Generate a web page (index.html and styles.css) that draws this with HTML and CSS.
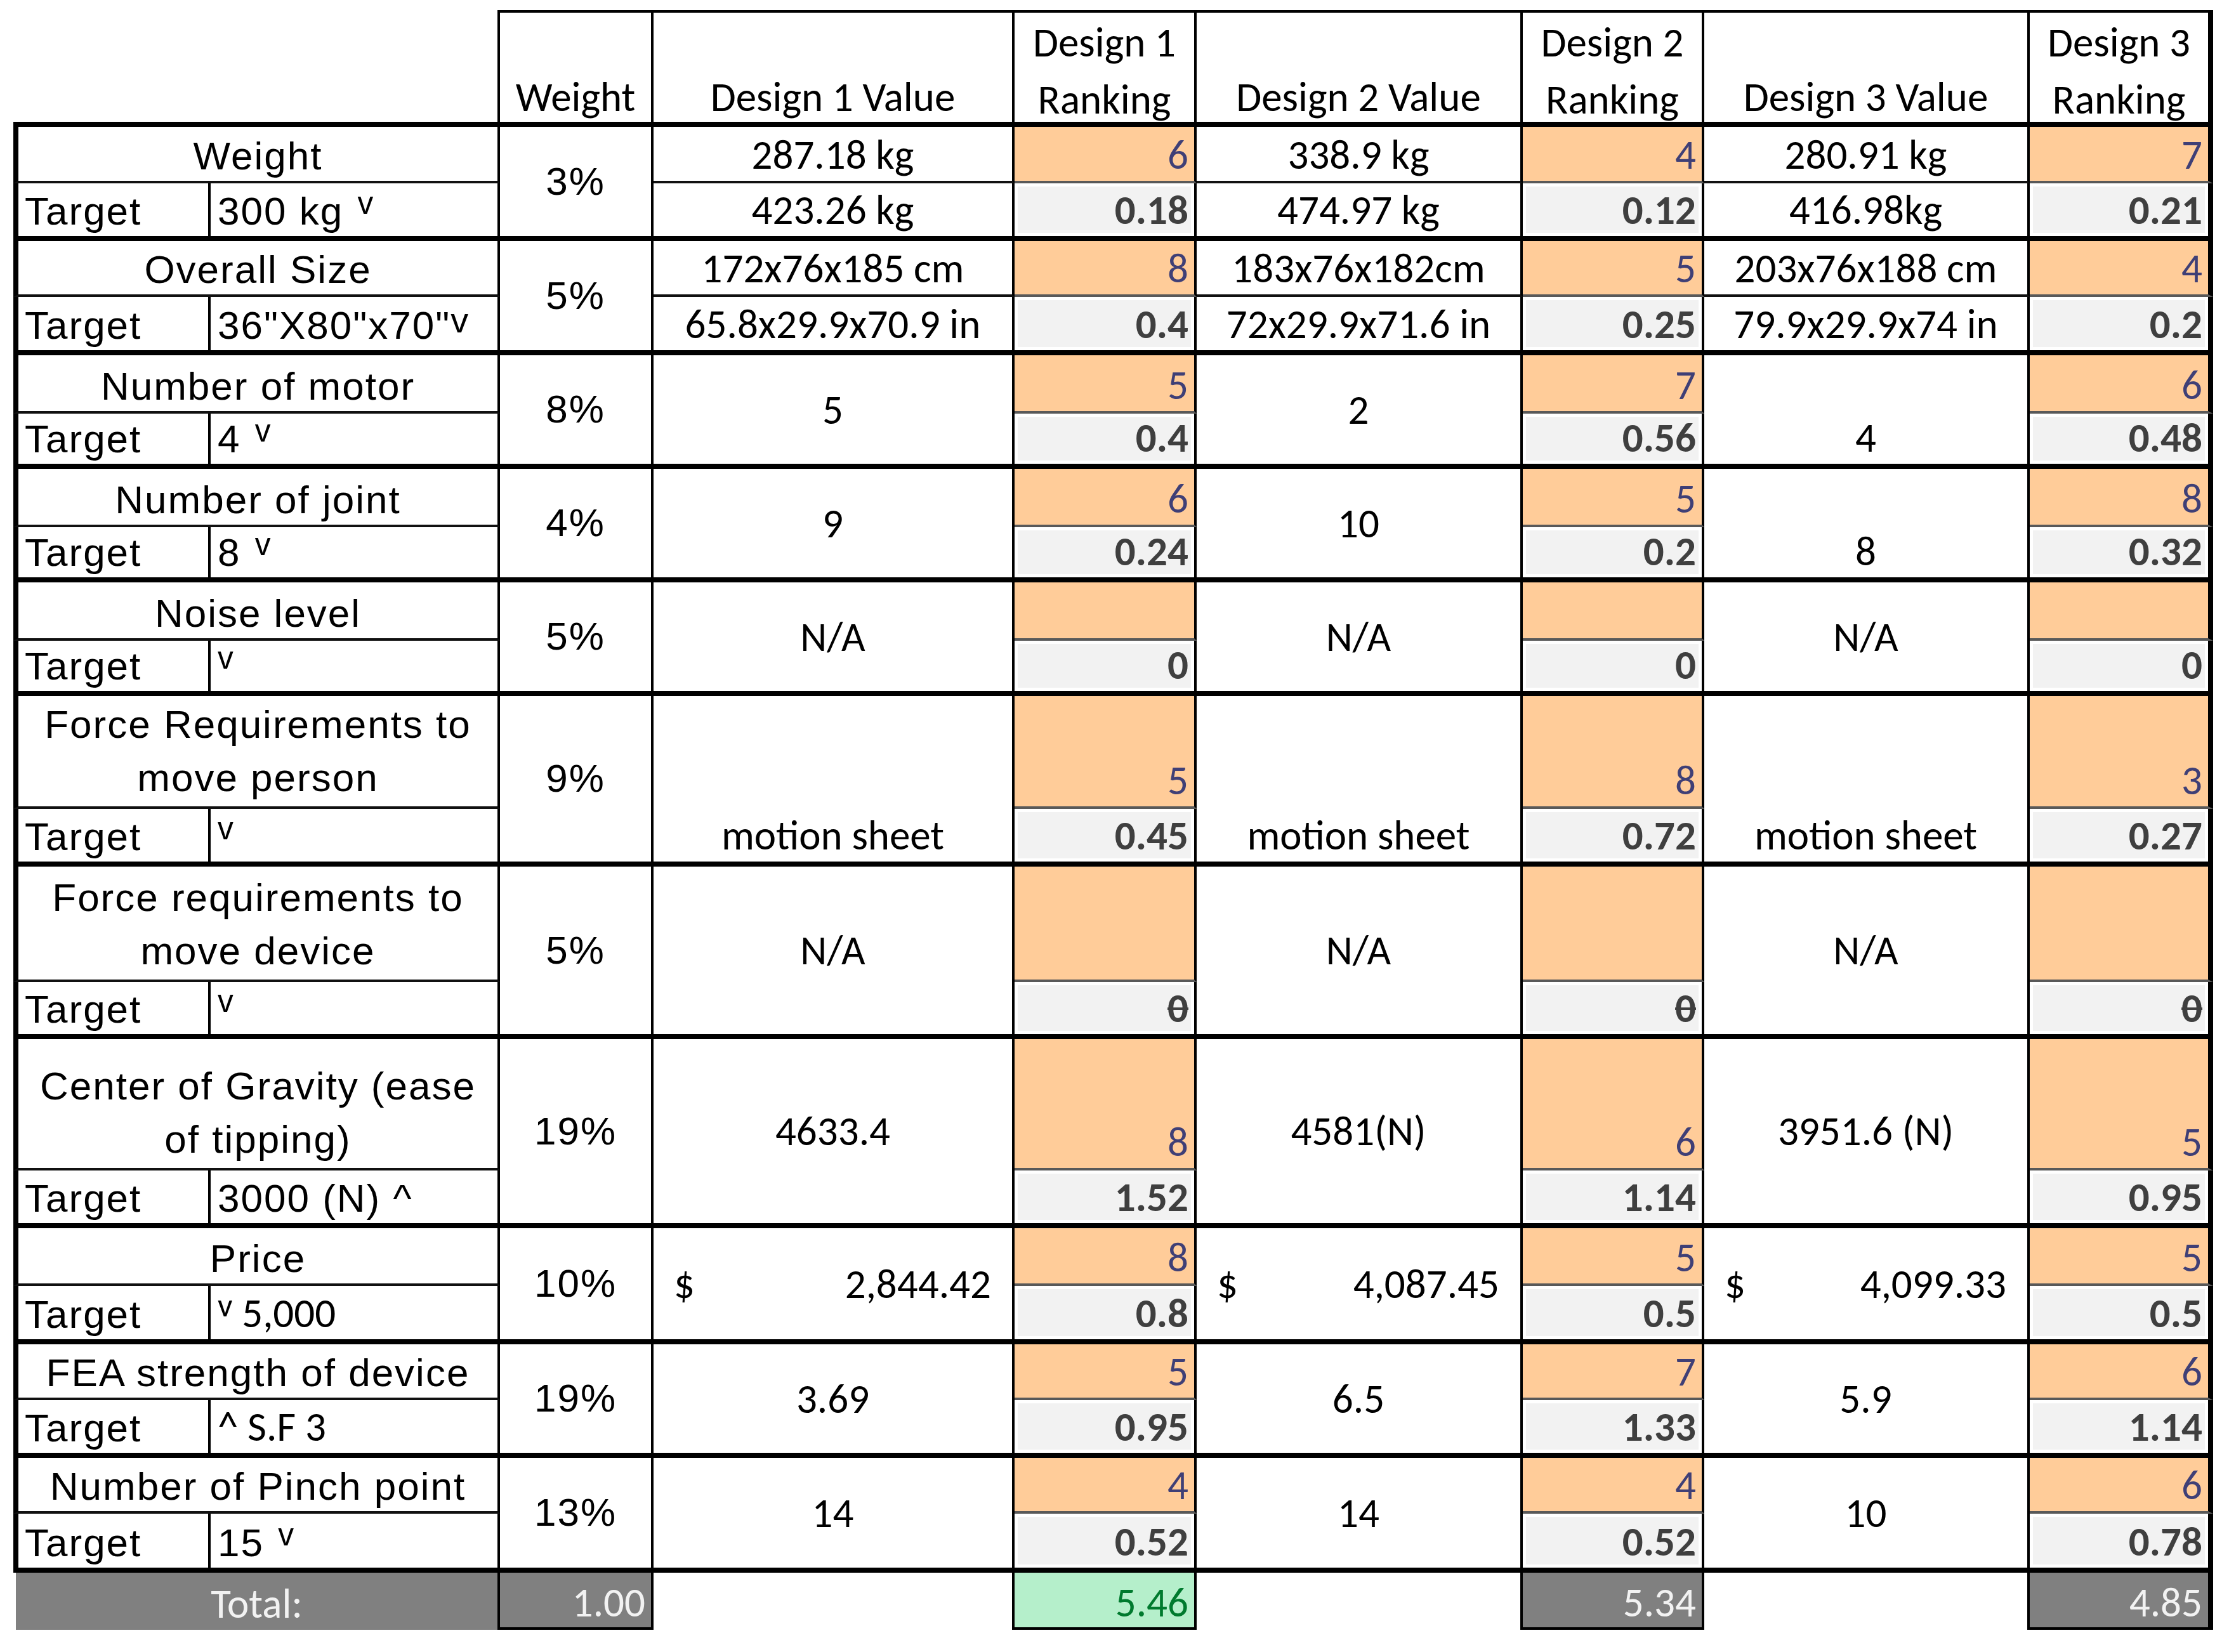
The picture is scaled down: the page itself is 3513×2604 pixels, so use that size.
FILE: index.html
```
<!DOCTYPE html>
<html lang="en">
<head>
<meta charset="utf-8">
<title>Design decision matrix</title>
<link rel="stylesheet" href="styles.css">
</head>
<body>
<div class="sheet">
  <div class="grid">
    <!-- header -->
    <div class="c sp"></div>
    <div class="c h k">Weight</div>
    <div class="c h k">Design 1 Value</div>
    <div class="c h k two"><span>Design 1<br>Ranking</span></div>
    <div class="c h k">Design 2 Value</div>
    <div class="c h k two"><span>Design 2<br>Ranking</span></div>
    <div class="c h k">Design 3 Value</div>
    <div class="c h k two last"><span>Design 3<br>Ranking</span></div>

    <!-- Weight -->
    <div class="c first cs lab mid a">Weight</div>
    <div class="c rs end wt a">3%</div>
    <div class="c val mid k">287.18 kg</div>
    <div class="c rank k">6</div>
    <div class="c val mid k">338.9 kg</div>
    <div class="c rank k">4</div>
    <div class="c val mid k">280.91 kg</div>
    <div class="c rank k last">7</div>
    <div class="c first tgt end a">Target</div>
    <div class="c tv end a">300 kg<span class="dn">v</span></div>
    <div class="c val end k">423.26 kg</div>
    <div class="c score k">0.18</div>
    <div class="c val end k">474.97 kg</div>
    <div class="c score k">0.12</div>
    <div class="c val end k">416.98kg</div>
    <div class="c score k last">0.21</div>

    <!-- Overall Size -->
    <div class="c first cs lab mid a">Overall Size</div>
    <div class="c rs end wt a">5%</div>
    <div class="c val mid k">172x76x185 cm</div>
    <div class="c rank k">8</div>
    <div class="c val mid k">183x76x182cm</div>
    <div class="c rank k">5</div>
    <div class="c val mid k">203x76x188 cm</div>
    <div class="c rank k last">4</div>
    <div class="c first tgt end a">Target</div>
    <div class="c tv end a">36"X80"x70"<span class="dn2">v</span></div>
    <div class="c val end k">65.8x29.9x70.9 in</div>
    <div class="c score k">0.4</div>
    <div class="c val end k">72x29.9x71.6 in</div>
    <div class="c score k">0.25</div>
    <div class="c val end k">79.9x29.9x74 in</div>
    <div class="c score k last">0.2</div>

    <!-- Number of motor -->
    <div class="c first cs lab mid a">Number of motor</div>
    <div class="c rs end wt a">8%</div>
    <div class="c rs end val ctr k">5</div>
    <div class="c rank k">5</div>
    <div class="c rs end val ctr k">2</div>
    <div class="c rank k">7</div>
    <div class="c rs end val k">4</div>
    <div class="c rank k last">6</div>
    <div class="c first tgt end a">Target</div>
    <div class="c tv end a">4<span class="dn">v</span></div>
    <div class="c score k">0.4</div>
    <div class="c score k">0.56</div>
    <div class="c score k last">0.48</div>

    <!-- Number of joint -->
    <div class="c first cs lab mid a">Number of joint</div>
    <div class="c rs end wt a">4%</div>
    <div class="c rs end val ctr k">9</div>
    <div class="c rank k">6</div>
    <div class="c rs end val ctr k">10</div>
    <div class="c rank k">5</div>
    <div class="c rs end val k">8</div>
    <div class="c rank k last">8</div>
    <div class="c first tgt end a">Target</div>
    <div class="c tv end a">8<span class="dn">v</span></div>
    <div class="c score k">0.24</div>
    <div class="c score k">0.2</div>
    <div class="c score k last">0.32</div>

    <!-- Noise level -->
    <div class="c first cs lab mid a">Noise level</div>
    <div class="c rs end wt a">5%</div>
    <div class="c rs end val ctr k">N/A</div>
    <div class="c rank k"></div>
    <div class="c rs end val ctr k">N/A</div>
    <div class="c rank k"></div>
    <div class="c rs end val ctr k">N/A</div>
    <div class="c rank k last"></div>
    <div class="c first tgt end a">Target</div>
    <div class="c tv end a"><span class="dn solo">v</span></div>
    <div class="c score k">0</div>
    <div class="c score k">0</div>
    <div class="c score k last">0</div>

    <!-- Force Requirements to move person -->
    <div class="c first cs lab wrap mid a">Force Requirements to<br>move person</div>
    <div class="c rs end wt a">9%</div>
    <div class="c rs end val k">motion sheet</div>
    <div class="c rank k">5</div>
    <div class="c rs end val k">motion sheet</div>
    <div class="c rank k">8</div>
    <div class="c rs end val k">motion sheet</div>
    <div class="c rank k last">3</div>
    <div class="c first tgt end a">Target</div>
    <div class="c tv end a"><span class="dn solo">v</span></div>
    <div class="c score k">0.45</div>
    <div class="c score k">0.72</div>
    <div class="c score k last">0.27</div>

    <!-- Force requirements to move device -->
    <div class="c first cs lab wrap mid a">Force requirements to<br>move device</div>
    <div class="c rs end wt a">5%</div>
    <div class="c rs end val ctr k">N/A</div>
    <div class="c rank k"></div>
    <div class="c rs end val ctr k">N/A</div>
    <div class="c rank k"></div>
    <div class="c rs end val ctr k">N/A</div>
    <div class="c rank k last"></div>
    <div class="c first tgt end a">Target</div>
    <div class="c tv end a"><span class="dn solo">v</span></div>
    <div class="c score k"><span class="strike">0</span></div>
    <div class="c score k"><span class="strike">0</span></div>
    <div class="c score k last"><span class="strike">0</span></div>

    <!-- Center of Gravity -->
    <div class="c first cs lab wrap mid a">Center of Gravity (ease<br>of tipping)</div>
    <div class="c rs end wt a">19%</div>
    <div class="c rs end val ctr k">4633.4</div>
    <div class="c rank k">8</div>
    <div class="c rs end val ctr k">4581(N)</div>
    <div class="c rank k">6</div>
    <div class="c rs end val ctr k">3951.6 (N)</div>
    <div class="c rank k last">5</div>
    <div class="c first tgt end a">Target</div>
    <div class="c tv end a">3000 (N) ^</div>
    <div class="c score k">1.52</div>
    <div class="c score k">1.14</div>
    <div class="c score k last">0.95</div>

    <!-- Price -->
    <div class="c first cs lab mid a">Price</div>
    <div class="c rs end wt a">10%</div>
    <div class="c rs end val price k"><span>$</span><span>2,844.42</span></div>
    <div class="c rank k">8</div>
    <div class="c rs end val price k"><span>$</span><span>4,087.45</span></div>
    <div class="c rank k">5</div>
    <div class="c rs end val price k"><span>$</span><span>4,099.33</span></div>
    <div class="c rank k last">5</div>
    <div class="c first tgt end a">Target</div>
    <div class="c tv end k"><span class="dn solo">v</span>&nbsp;5,000</div>
    <div class="c score k">0.8</div>
    <div class="c score k">0.5</div>
    <div class="c score k last">0.5</div>

    <!-- FEA strength -->
    <div class="c first cs lab mid a">FEA strength of device</div>
    <div class="c rs end wt a">19%</div>
    <div class="c rs end val ctr k">3.69</div>
    <div class="c rank k">5</div>
    <div class="c rs end val ctr k">6.5</div>
    <div class="c rank k">7</div>
    <div class="c rs end val ctr k">5.9</div>
    <div class="c rank k last">6</div>
    <div class="c first tgt end a">Target</div>
    <div class="c tv end k">^ S.F 3</div>
    <div class="c score k">0.95</div>
    <div class="c score k">1.33</div>
    <div class="c score k last">1.14</div>

    <!-- Pinch points -->
    <div class="c first cs lab mid a">Number of Pinch point</div>
    <div class="c rs end wt a">13%</div>
    <div class="c rs end val ctr k">14</div>
    <div class="c rank k">4</div>
    <div class="c rs end val ctr k">14</div>
    <div class="c rank k">4</div>
    <div class="c rs end val ctr k">10</div>
    <div class="c rank k last">6</div>
    <div class="c first tgt end a">Target</div>
    <div class="c tv end a">15<span class="dn">v</span></div>
    <div class="c score k">0.52</div>
    <div class="c score k">0.52</div>
    <div class="c score k last">0.78</div>

    <!-- Total -->
    <div class="c tot k">Total:</div>
    <div class="c tnum k">1.00</div>
    <div class="c blank"></div>
    <div class="c tnum good k">5.46</div>
    <div class="c blank"></div>
    <div class="c tnum k">5.34</div>
    <div class="c blank"></div>
    <div class="c tnum k last">4.85</div>
  </div>
</div>
</body>
</html>
```
FILE: styles.css
```
html, body {
  margin: 0;
  padding: 0;
  background: #ffffff;
}

.sheet {
  padding: 16px 0 0 21px;
}

.grid {
  display: grid;
  grid-template-columns: 311px 456px 242px 569px 287px 514px 286px 513px 289px;
  grid-template-rows:
    184px
    89px 91px
    88px 92px
    92px 87px
    92px 87px
    92px 87px
    178px 91px
    182px 90px
    207px 91px
    91px 92px
    88px 91px
    88px 93px
    90px;
  color: #000;
}

.a {
  font-family: "Liberation Sans", Arial, sans-serif;
  font-size: 62px;
  letter-spacing: 2px;
}

.k {
  font-family: Carlito, Lato, sans-serif;
  font-size: 65px;
}

.c {
  box-sizing: border-box;
  display: flex;
  min-width: 0;
  white-space: nowrap;
  border-right: 4px solid #000;
  line-height: 1.2;
}

.first { border-left: 8px solid #000; }
.last { border-right-width: 8px; }
.mid { border-bottom: 4px solid #111; }
.end { border-bottom: 8px solid #000; }
.rs { grid-row: span 2; }
.cs { grid-column: span 2; }

/* header */
.sp {
  grid-column: span 2;
  border-bottom: 8px solid #000;
}
.h {
  border-top: 4px solid #000;
  border-bottom: 8px solid #000;
  justify-content: center;
  align-items: flex-end;
  text-align: center;
  padding-bottom: 0;
}
.h > span {
  margin-bottom: -3px;
}
.two span {
  line-height: 90px;
  margin-bottom: -10px;
}

/* labels */
.lab {
  justify-content: center;
  align-items: flex-end;
  text-align: center;
  padding-bottom: 2px;
}
.lab.wrap {
  line-height: 84px;
  padding-bottom: 3px;
}
.tgt {
  align-items: flex-end;
  padding: 0 0 2px 10px;
}
.tv {
  align-items: flex-end;
  padding: 0 0 2px 11px;
}
.dn {
  display: inline-block;
  font-size: 0.8em;
  margin-left: 0.45em;
  position: relative;
  top: -0.4em;
}
.dn.solo {
  margin-left: 0;
}
.dn2 {
  font-size: 0.9em;
  position: relative;
  top: -0.2em;
}
.wt {
  justify-content: center;
  align-items: center;
}

/* values */
.val {
  justify-content: center;
  align-items: flex-end;
  padding-bottom: 2px;
}
.val.ctr {
  align-items: center;
  padding-bottom: 0;
}
.val.price {
  justify-content: space-between;
  align-items: center;
  padding: 0 33px 0 32px;
}

/* ranking cells */
.rank {
  background: #ffcc99;
  color: #3f3f76;
  border-bottom: 4px solid #595959;
  justify-content: flex-end;
  align-items: flex-end;
  padding: 0 9px 2px 0;
}
.score {
  background: #f2f2f2;
  box-shadow: inset 0 0 0 5px #ffffff;
  color: #3f3f3f;
  font-weight: 700;
  border-bottom: 8px solid #000;
  justify-content: flex-end;
  align-items: flex-end;
  padding: 0 9px 2px 0;
}
.strike {
  text-decoration: line-through;
  text-decoration-thickness: 4px;
}

/* total row */
.tot {
  grid-column: span 2;
  margin-left: 4px;
  background: #808080;
  color: #f2f2f2;
  justify-content: center;
  align-items: flex-end;
  padding-bottom: 2px;
}
.tnum {
  background: #808080;
  color: #f2f2f2;
  border-bottom: 4px solid #000;
  justify-content: flex-end;
  align-items: flex-end;
  padding: 0 9px 0 0;
}
.tnum.good {
  background: #b5efcb;
  color: #007a2e;
}
.blank {
  background: #ffffff;
}
```
